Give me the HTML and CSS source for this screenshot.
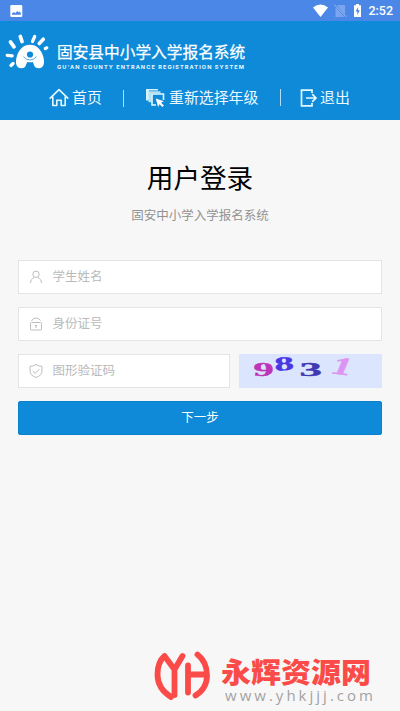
FILE: index.html
```html
<!DOCTYPE html>
<html lang="zh-CN">
<head>
<meta charset="utf-8">
<title>固安县中小学入学报名系统</title>
<link rel="stylesheet" href="styles.css">
</head>
<body>
<div class="status">
  <svg class="status-photo" width="13" height="12" viewBox="0 0 13 12"><rect x=".3" y="0" width="12" height="12" rx="1.3" fill="#fff"/><path d="M2 9.8V8.600L4 7l1.200 1.200L7.300 6l1.300 1.600 1-1 1.200 1.400v1.800z" fill="#4b87e7"/></svg>
  <svg class="status-icons" width="52" height="16" viewBox="0 0 52 16">
    <path d="M0 4.600Q7.500-1.400 15 4.600L7.500 14z" fill="#fff"/>
    <path d="M25 2h7v12h-9.500V5z" fill="#7ba6ef"/><path d="M22.500 2.500l10 11.500" stroke="#4b87e7" stroke-width="2"/><path d="M21.500 1.800l11.500 12" stroke="#9fbef4"/>
    <path d="M41 2.200h2V1h3v1.200h2V14h-7z" fill="#fff"/><path d="M45.200 4l-2.700 4.500h1.800v3.500l2.500-4.800H45z" fill="#4b87e7"/>
  </svg>
  <span class="clock">2:52</span>
</div>
<header class="header">
  <div class="brand">
    <svg class="logo" width="46" height="38" viewBox="0 0 46 38">
      <g stroke="#fff" stroke-linecap="round" fill="none">
        <path d="M15.300 2.500l1.700 5" stroke-width="3.800"/><path d="M29.700 2.500l-2.200 5" stroke-width="3.200"/><path d="M5.500 8l3.500 4.800" stroke-width="3.800"/><path d="M40.300 14.500l1.500-.7" stroke-width="3.200"/><path d="M38.300 5.200l-4 4.300" stroke-width="3.600"/><path d="M2.200 21.300l5 .6" stroke-width="3.200"/><path d="M8 29.500l-2 1.900" stroke-width="3.400"/>
      </g>
      <path d="M16.500 34.300C10.500 34.300 10.200 28 11.800 22.500 13.800 15.500 18.500 10.800 25 10.800s11.200 4.700 13.200 11.700c1.600 5.500 1.300 11.800-4.700 11.800-2.300 0-3.700-1.100-4.500-3.200l-1.200-3.200q-2.800.8-5.600 0L21 31.100c-.8 2.100-2.200 3.200-4.500 3.200z" fill="#fff"/>
      <circle cx="25" cy="20.500" r="3.100" fill="#0f8ad9"/>
      <path d="M18.500 22.500q2.500 3.500 6.500 3.500t6.500-3.500" stroke="#0f8ad9" stroke-width=".7" fill="none"/>
    </svg>
    <div class="brand-text">
      <div class="brand-cn">固安县中小学入学报名系统</div>
      <svg class="brand-en" width="190" height="8"><text x="0" y="6" textLength="188" lengthAdjust="spacingAndGlyphs">GU'AN COUNTY ENTRANCE REGISTRATION SYSTEM</text></svg>
    </div>
  </div>
  <nav class="nav">
    <a class="nav-home"><svg width="20" height="20" viewBox="0 0 20 20" fill="none" stroke="#e5f8ff" stroke-width="1.600" stroke-linejoin="round" stroke-linecap="round"><path d="M1.200 10.200L10 1.700l8.800 8.500M3.800 9v8.500h4v-5.300h4.400v5.300h4V9"/></svg><span>首页</span></a>
    <i class="line"></i>
    <a class="nav-grade"><svg width="20" height="20" viewBox="0 0 20 20"><path d="M1 1h12v1.500H4v10H1z" fill="#d5f2fc"/><path d="M3.500 3.200h12v2h-9v9h-3z" fill="#b5e2f5"/><path d="M11 17H7V6h11.500v6" fill="none" stroke="#e5f8ff" stroke-width="1.600"/><path d="M10.800 10.500l8 2.800-2.700 1.500 2.800 2.800-1.500 1.500-2.900-2.900-1.400 2.700z" fill="#fff"/></svg><span>重新选择年级</span></a>
    <i class="line line-2"></i>
    <a class="nav-exit"><svg width="18" height="18" viewBox="0 0 18 18" fill="none" stroke="#e5f8ff" stroke-width="1.700"><path d="M12 4V1.200H1.500v15.600H12V14M6 9h10M12.200 5.200L16 9l-3.800 3.800"/></svg><span>退出</span></a>
  </nav>
</header>
<main class="main">
  <h1 class="title">用户登录</h1>
  <p class="subtitle">固安中小学入学报名系统</p>
  <form class="form">
    <div class="field"><svg width="14" height="14" viewBox="0 0 14 14" fill="none" stroke="#bdbdbd"><circle cx="7" cy="4.300" r="3.200"/><path d="M1.500 13c.2-3 1.600-4.700 3.700-5.500M12.500 13c-.2-3-1.600-4.700-3.700-5.500"/></svg><span>学生姓名</span></div>
    <div class="field"><svg width="14" height="14" viewBox="0 0 14 14" fill="none" stroke="#bdbdbd"><rect x="1.500" y="5.500" width="11" height="7.500" rx="1"/><path d="M2.500 4Q4 1 7 1t4.500 2.500M7 8v3M6 8.500h2"/></svg><span>身份证号</span></div>
    <div class="row">
      <div class="field field-code"><svg width="14" height="14" viewBox="0 0 14 14" fill="none" stroke="#bdbdbd"><path d="M7 .5q2.500 1.800 6 1.900v4.800q0 4.200-6 6.300-6-2.100-6-6.300V2.400Q4.500 2.300 7 .5zM3.800 7l2.400 2.300 4.200-4.200"/></svg><span>图形验证码</span></div>
      <svg class="captcha" width="143" height="34" viewBox="0 0 143 34">
        <text transform="translate(14.500 21.500) scale(2.250 1)" font-size="18" fill="#bd34b7" stroke="#bd34b7">9</text>
        <text transform="translate(36 17) rotate(-5) scale(2 1)" font-size="19.500" fill="#4a36e3" stroke="#4a36e3">8</text>
        <text transform="translate(60.500 21.500) scale(2.500 1)" font-size="18" fill="#413ab2" stroke="#413ab2">3</text>
        <text transform="translate(90 19) rotate(7) skewX(-16) scale(1.600 1)" font-size="25" fill="#dc94f2" stroke="#dc94f2">1</text>
      </svg>
    </div>
    <div class="submit">下一步</div>
  </form>
</main>
<footer class="mark">
  <svg width="57" height="50" viewBox="0 0 57 50" fill="none" stroke="#fb4b49" stroke-width="5.800" stroke-linecap="round" stroke-linejoin="round">
    <path d="M10.500 5Q3.500 11 3.500 23.500C3.500 34 9 41 17 46M10.500 5l10 13.500L28.500 5M20.500 18.500v25.500"/><path d="M34 14.500v27M34 23.500h18M43.500 3.500C50.500 9 53 16 53 24.500c0 9-5 16-11.500 20"/>
  </svg>
  <div class="mark-text">
    <svg width="156" height="34"><text class="mark-cn" x="1" y="27" textLength="150" lengthAdjust="spacingAndGlyphs">永辉资源网</text></svg>
    <svg class="mark-url" width="156" height="20"><text x="5" y="11" textLength="148" lengthAdjust="spacing">www.yhkjjj.com</text></svg>
  </div>
</footer>
</body>
</html>
```

FILE: styles.css
```css
* { box-sizing: border-box; }
body {
  margin: 0;
  width: 400px;
  height: 711px;
  display: flex;
  flex-direction: column;
  overflow: hidden;
  background: #f7f7f7;
  font-family: "Noto Sans CJK SC", sans-serif;
}
svg { display: block; flex: none; overflow: visible; }
.status {
  height: 21px;
  flex: none;
  background: #4b87e7;
  display: flex;
  align-items: center;
  padding: 0 7px 0 10px;
}
.status-icons { margin-left: auto; }
.clock {
  width: 28px;
  text-align: right;
  color: #fff;
  font: 500 12.5px/20px Roboto, sans-serif;
  margin-top: 1px;
}
.header {
  height: 99px;
  flex: none;
  background: #0f8ad9;
  color: #fff;
}
.brand { display: flex; padding: 13px 0 0 5px; height: 62px; }
.brand-text { padding: 7px 0 0 6px; }
.brand-cn {
  font-size: 15.700px;
  line-height: 22px;
  font-weight: 400;
  -webkit-text-stroke: .25px #fff;
  white-space: nowrap;
}
.brand-en text {
  font: 700 5.200px Inter, sans-serif;
  letter-spacing: 1px;
  fill: #e5f8ff;
}
.nav {
  display: flex;
  align-items: center;
  height: 30px;
  padding-left: 49px;
  color: #e9f9ff;
  font-size: 14.900px;
  line-height: 22px;
  white-space: nowrap;
}
.nav span { margin-top: -2px; }
.nav a { display: flex; align-items: center; }
.nav-home { width: 74px; gap: 3px; }
.nav-grade { width: 156px; padding-left: 21px; gap: 4px; }
.nav-exit { padding-left: 19px; gap: 2px; }
.line { width: 1px; height: 17px; background: #b3def5; }
.line-2 { margin-top: -1px; }
.main { flex: none; padding: 37px 18px 0; }
.title {
  margin: 0;
  text-align: center;
  font-size: 26.600px;
  font-weight: 400;
  line-height: 40px;
  color: #000;
}
.subtitle {
  margin: 8px 0 0;
  text-align: center;
  font-size: 12.500px;
  line-height: 20px;
  color: #929292;
}
.form {
  margin-top: 35px;
  display: flex;
  flex-direction: column;
  gap: 13px;
}
.field {
  height: 34px;
  border: 1px solid #e4e4e4;
  background: #fff;
  display: flex;
  align-items: center;
  gap: 9.500px;
  padding-left: 10px;
  font-size: 12.500px;
  line-height: 20px;
  color: #bababa;
}
.field span { margin-top: -2px; }
.row { display: flex; gap: 9px; }
.field-code { width: 212px; }
.captcha {
  background: #dce5fe;
  font-family: "Liberation Serif", serif;
  font-weight: 700;
  stroke-width: .35px;
}
.submit {
  height: 34px;
  border-radius: 2px;
  border: 1px solid #0d82cc;
  background: #0f8ad9;
  color: #fff;
  text-align: center;
  font-size: 12.500px;
  line-height: 30px;
}
.mark {
  margin-top: auto;
  display: flex;
  height: 60px;
  padding-left: 154px;
}
.mark-text { padding: 5px 0 0 9px; }
.mark-cn { font-size: 28.500px; font-weight: 900; fill: #fb4b49; }
.mark-url { font: 15px "Open Sans", sans-serif; fill: #a3a3a3; }
```
